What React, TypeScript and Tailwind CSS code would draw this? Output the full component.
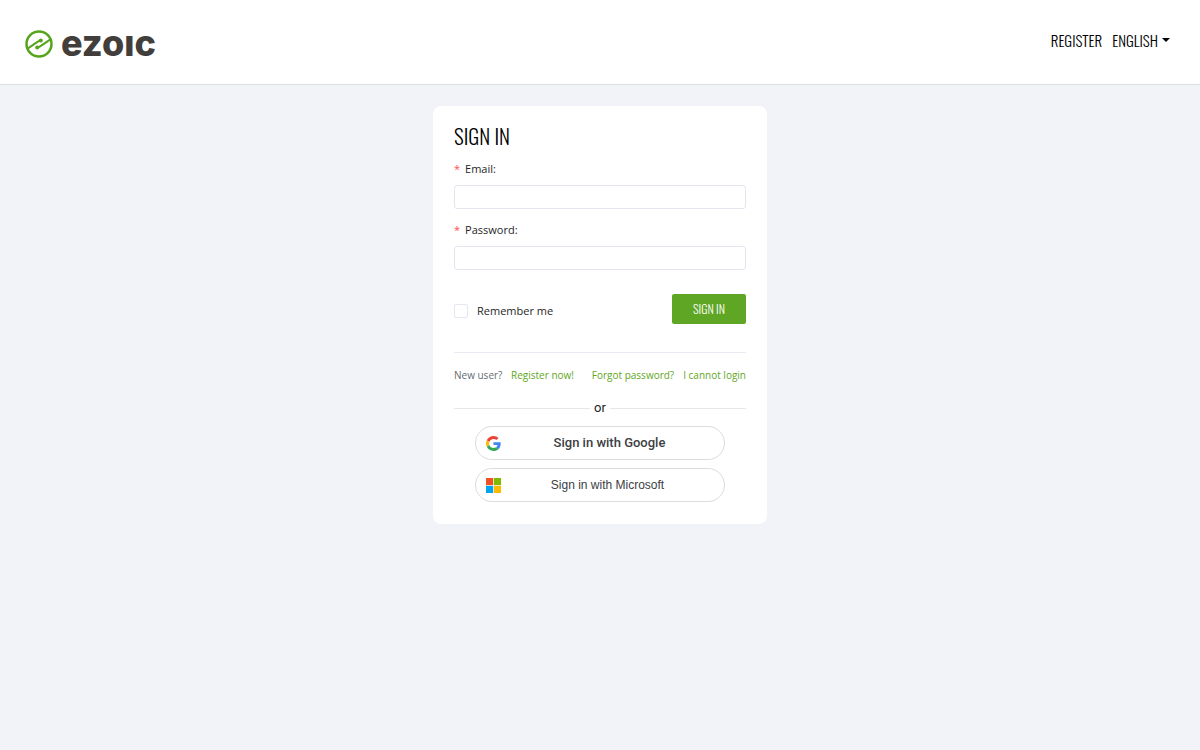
import React, { useState } from 'react';

const condensed = "font-['Oswald',sans-serif] font-light";

function Logo() {
  return (
    <a href="#" aria-label="ezoic" className="flex items-center gap-2">
      <svg viewBox="0 0 28 28" className="h-7 w-7" fill="none" stroke="#55a51c">
        <circle cx="14" cy="14" r="12.5" strokeWidth="2.5" />
        <path d="M2.6 18.6 L10.6 13.2 Q12.6 11.8 16 10.2" strokeWidth="2" />
        <path d="M25.4 9.4 L17.4 14.8 Q15.4 16.2 12 17.8" strokeWidth="2" />
        <circle cx="15.8" cy="10.4" r="2" fill="#55a51c" stroke="none" />
        <circle cx="12.2" cy="17.6" r="2" fill="#55a51c" stroke="none" />
      </svg>
      <span className="pb-[3px] font-['Inter',sans-serif] text-4xl/9 font-extrabold text-[#413e3b]">ezoıc</span>
    </a>
  );
}

function GoogleIcon() {
  return (
    <svg viewBox="0 0 48 48" className="h-[15px] w-[15px]">
      <path fill="#EA4335" d="M24 9.5c3.54 0 6.71 1.22 9.21 3.6l6.85-6.85C35.9 2.38 30.47 0 24 0 14.62 0 6.51 5.38 2.56 13.22l7.98 6.19C12.43 13.72 17.74 9.5 24 9.5z" />
      <path fill="#4285F4" d="M46.98 24.55c0-1.57-.15-3.09-.38-4.55H24v9.02h12.94c-.58 2.96-2.26 5.48-4.78 7.18l7.73 6c4.51-4.18 7.09-10.36 7.09-17.65z" />
      <path fill="#FBBC05" d="M10.53 28.59c-.48-1.45-.76-2.99-.76-4.59s.27-3.14.76-4.59l-7.98-6.19C.92 16.46 0 20.12 0 24c0 3.88.92 7.54 2.56 10.78l7.97-6.19z" />
      <path fill="#34A853" d="M24 48c6.48 0 11.93-2.13 15.89-5.81l-7.73-6c-2.15 1.45-4.92 2.3-8.16 2.3-6.26 0-11.57-4.22-13.47-9.91l-7.98 6.19C6.51 42.62 14.62 48 24 48z" />
    </svg>
  );
}

function MicrosoftIcon() {
  return (
    <svg viewBox="0 0 21 21" className="h-[15px] w-[15px]">
      <path fill="#f25022" d="M0 0h10v10H0z" />
      <path fill="#7fba00" d="M11 0h10v10H11z" />
      <path fill="#00a4ef" d="M0 11h10v10H0z" />
      <path fill="#ffb900" d="M11 11h10v10H11z" />
    </svg>
  );
}

type FieldProps = {
  id: string,
  label: string,
  type: string,
  value: string,
  onChange: (value: string) => void
}

function Field({ id, label, type, value, onChange }: FieldProps) {
  return (
    <div className="flex flex-col gap-[6px]">
      <label htmlFor={id} className="flex gap-[5px] text-[11px]/5 text-[#262626]">
        <span className="text-[#ff4d4f]">*</span>
        {label}
      </label>
      <input
        id={id}
        type={type}
        value={value}
        onChange={(e) => onChange(e.target.value)}
        className="h-6 w-full rounded-[3px] border border-[#e4e5ef] px-2 text-[11px] outline-none focus:border-[#5fa624]"
      />
    </div>
  );
}

type SocialButtonProps = {
  icon: React.ReactNode,
  children: React.ReactNode,
  className: string
}

function SocialButton({ icon, children, className }: SocialButtonProps) {
  return (
    <button
      type="button"
      className={`flex h-[34px] w-full items-center rounded-full border border-[#dadce0] px-[10px] text-[#3c4043] hover:bg-gray-50 ${className}`}
    >
      {icon}
      <span className="flex-1 pb-px">{children}</span>
    </button>
  );
}

export default function App() {
  const [email, setEmail] = useState<string>('');
  const [password, setPassword] = useState<string>('');
  const [remember, setRemember] = useState<boolean>(false);

  return (
    <div className="min-h-screen bg-[#f2f3f8] font-['Open_Sans',sans-serif] text-[#212529]">
      <header className="flex h-[85px] items-center justify-between border-b border-[#dcdfdf] bg-white pr-[30px] pl-[25px] pt-1">
        <Logo />
        <nav className={`flex items-center gap-[10px] pb-2 text-[15px]/6 text-black ${condensed}`}>
          <a href="#register">REGISTER</a>
          <button type="button" className="flex items-center gap-1">
            ENGLISH
            <svg viewBox="0 0 8 4" className="h-1 w-2" fill="currentColor"><path d="M0 0h8L4 4z" /></svg>
          </button>
        </nav>
      </header>

      <main className="mx-auto mt-[21px] w-full max-w-[334px] rounded-lg bg-white px-[21px] pt-[14px] pb-[22px]">
        <form onSubmit={(e) => e.preventDefault()}>
          <h1 className={`text-[21px]/8 text-black ${condensed}`}>SIGN IN</h1>
          <div className="mt-[7px] flex flex-col gap-[11px]">
            <Field id="email" label="Email:" type="email" value={email} onChange={setEmail} />
            <Field id="password" label="Password:" type="password" value={password} onChange={setPassword} />
          </div>

          <div className="mt-6 flex items-center justify-between">
            <label className="flex items-center gap-[9px] pt-1 text-[11px]/5 text-[#262626]">
              <input
                type="checkbox"
                checked={remember}
                onChange={(e) => setRemember(e.target.checked)}
                className="h-[14px] w-[14px] appearance-none rounded-[2px] border border-[#e4e8f2] checked:bg-[#5fa624]"
              />
              Remember me
            </label>
            <button type="submit" className={`h-[30px] w-[74px] rounded-[2px] bg-[#5fa624] text-xs text-white ${condensed}`}>
              SIGN IN
            </button>
          </div>
        </form>

        <div className="mt-7 flex justify-between border-t border-[#e9ebf3] pt-3 text-[10px]/5 whitespace-nowrap text-[#5fa624]">
          <p className="text-[#646c72]">
            New user? <a href="#register" className="ml-[6px] text-[#5fa624]">Register now!</a>
          </p>
          <div className="flex gap-[9px]">
            <a href="#forgot">Forgot password?</a>
            <a href="#help">I cannot login</a>
          </div>
        </div>

        <div className="mt-[13px] flex items-center gap-1 font-['Roboto',sans-serif] text-[13px]/5">
          <span className="h-px flex-1 bg-[#e5e7eb]" />
          or
          <span className="h-px flex-1 bg-[#e5e7eb]" />
        </div>

        <div className="mt-2 flex flex-col gap-2 px-[21px]">
          <SocialButton icon={<GoogleIcon />} className="gap-1 font-['Roboto',sans-serif] text-[13px] font-medium">
            Sign in with Google
          </SocialButton>
          <SocialButton icon={<MicrosoftIcon />} className="font-['Liberation_Sans',sans-serif] text-xs">
            Sign in with Microsoft
          </SocialButton>
        </div>
      </main>
    </div>
  );
}
